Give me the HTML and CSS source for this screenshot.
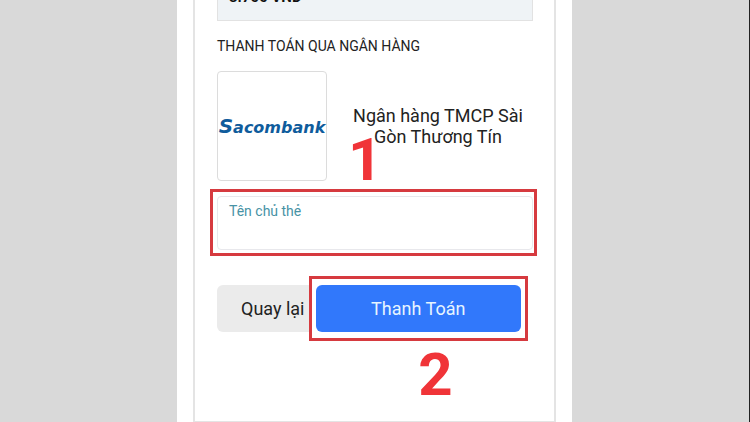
FILE: index.html
```html
<!DOCTYPE html>
<html lang="vi">
<head>
    <meta charset="UTF-8">
    <meta name="viewport" content="width=device-width, initial-scale=1.0">
    <title>Thanh toán</title>
    <link rel="stylesheet" href="styles.css">
</head>
<body>
    <main class="phone">
        <form class="card">
            <div class="amount">3.700 VND</div>
            <h1 class="title">THANH TOÁN QUA NGÂN HÀNG</h1>

            <div class="bank">
                <div class="bank-logo"><span class="logo-cap">S</span>acombank</div>
                <p class="bank-name">Ngân hàng TMCP Sài Gòn Thương Tín</p>
                <span class="step step-1">1</span>
            </div>

            <div class="highlight field-box">
                <div class="field">
                    <label for="card-name">Tên chủ thẻ</label>
                    <input type="text" id="card-name">
                </div>
            </div>

            <div class="actions">
                <button type="button" class="btn-back">Quay lại</button>
                <div class="highlight pay-box">
                    <button type="submit" class="btn-pay">Thanh Toán</button>
                    <span class="step step-2">2</span>
                </div>
            </div>
        </form>
    </main>
</body>
</html>
```
FILE: styles.css
```css
* {
    box-sizing: border-box;
}
body {
    margin: 0;
    min-height: 100vh;
    display: flex;
    justify-content: center;
    background-color: #d9d9d9;
    border-right: 1px solid #222;
    font-family: Roboto, "Noto Sans", sans-serif;
    color: #222;
}
.phone {
    display: flex;
    width: 100%;
    max-width: 395px;
    padding: 0 16px;
    background: white;
}
.card {
    flex: 1;
    min-width: 0;
    padding: 0 21px 0 22px;
    border: 2px solid #e4e4e4;
    border-top: none;
    border-bottom-width: 1px;
}
/* only the lower part of the amount is in view */
.amount {
    display: flex;
    align-items: flex-end;
    height: 21px;
    padding: 0 11px 14px;
    overflow: hidden;
    background: #eff3f6;
    border: 1px solid #e2e2e2;
    border-top: none;
    font-size: 15px;
    font-weight: bold;
    line-height: 18px;
    color: #111;
}
.title {
    margin: 15px 0;
    font-size: 14px;
    font-weight: normal;
    line-height: 20px;
}
.bank {
    position: relative;
    display: flex;
    align-items: center;
    gap: 16px;
}
.bank-logo {
    flex: none;
    width: 110px;
    height: 110px;
    border: 1px solid #dcdcdc;
    border-radius: 4px;
    font-family: "DejaVu Sans", sans-serif;
    font-size: 16px;
    font-weight: bold;
    font-style: italic;
    line-height: 108px;
    text-align: center;
    color: #0f5c9c;
}
.logo-cap {
    font-size: 20px;
}
.bank-name {
    flex: 1;
    margin: 0;
    font-size: 18px;
    line-height: 21px;
    text-align: center;
}
.highlight {
    border: 3px solid #d63a3f;
}
.field-box {
    margin: 8px -4px 0 -7px;
    padding: 4px 1px 3px 4px;
}
.field {
    padding: 5px 11px;
    border: 1px solid #e8e8ec;
    border-radius: 4px;
}
.field label {
    display: block;
    font-size: 14px;
    line-height: 18px;
    color: #4793a5;
}
.field input {
    display: block;
    width: 100%;
    height: 24px;
    padding: 0;
    border: none;
    outline: none;
    background: none;
    font: inherit;
    font-size: 16px;
}
.actions {
    display: flex;
    align-items: center;
    margin-top: 20px;
}
.btn-back,
.btn-pay {
    height: 47px;
    border: none;
    border-radius: 6px;
    font-family: inherit;
    font-size: 18px;
    cursor: pointer;
}
.btn-back {
    flex: none;
    padding: 0 4px 0 24px;
    border-radius: 6px 0 0 6px;
    background: #ebebeb;
    color: #222;
}
.pay-box {
    position: relative;
    flex: 1;
    margin-right: 5px;
    padding: 6px 4px;
    background: white;
}
.btn-pay {
    display: block;
    width: 100%;
    background: #3178fb;
    color: #e6f4ff;
}
/* step numbers over the form */
.step {
    position: absolute;
    font-size: 60px;
    font-weight: bold;
    line-height: 60px;
    color: #f03438;
}
.step-1 {
    left: 131px;
    top: 59px;
}
.step-2 {
    left: 50%;
    top: 66px;
}
```
